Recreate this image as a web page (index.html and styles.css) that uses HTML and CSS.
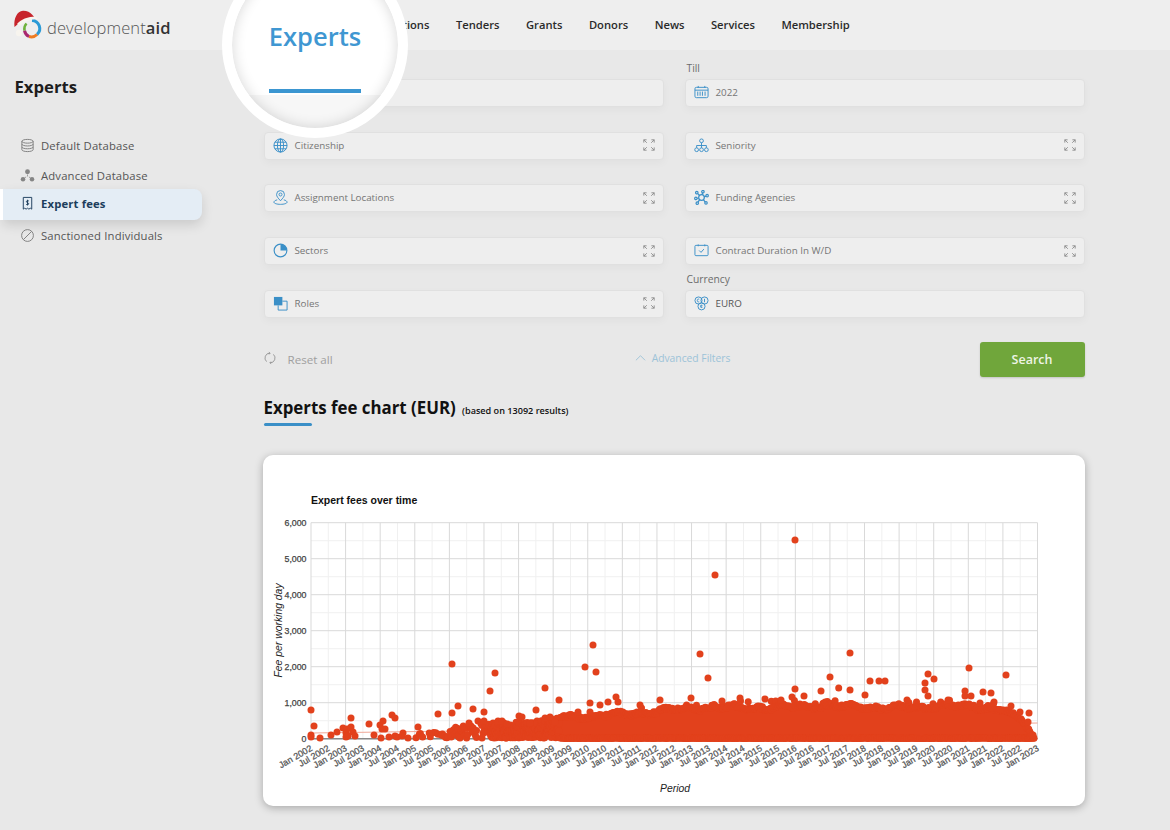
FILE: index.html
```html
<!DOCTYPE html>
<html lang="en">
<head>
<meta charset="utf-8">
<title>Experts fee chart</title>
<link rel="stylesheet" href="styles.css">
</head>
<body>
<header class="topbar">
  <a class="logo">
    <svg class="logo-mark" viewBox="0 0 30 30">
      <path class="ring-blue" d="M19 10.500a8 8 0 0 1 5 14"/>
      <path class="ring-orange" d="M24 24.500a8 8 0 0 1-8 2"/>
      <path class="ring-pink" d="M16 26.500a8 8 0 0 1-4.500-6"/>
      <path class="ring-green" d="M11.500 20.500a8 8 0 0 1 2-7"/>
      <path class="hat" d="M1.500 17C.5 9 4 1 10 .8c4-.1 7 1.700 9 3.700l3 3.500-12 2-5 4z"/>
      <path class="hat-brim" d="M4 14c3.500-4.500 11-7.500 19-7.500l1.500 2.500c-6.500 0-13 2.500-17.500 7z"/>
      <circle class="hat-ball" cx="6" cy="23" r="3.200"/>
    </svg>
    <span class="logo-text">development<b>aid</b></span>
  </a>
  <nav class="nav">
    <a>tions</a><a>Tenders</a><a>Grants</a><a>Donors</a><a>News</a><a>Services</a><a>Membership</a>
  </nav>
</header>

<div class="spotlight">
  <span class="spotlight-text">Experts</span>
  <span class="spotlight-bar"></span>
</div>

<div class="page">
  <aside class="sidebar">
    <h2 class="side-title">Experts</h2>
    <ul class="side-list">
      <li class="side-item">
        <svg class="side-icon" viewBox="0 0 16 16"><ellipse cx="8" cy="3.500" rx="6" ry="2"/><path d="M2 3.500v9c0 1.100 2.700 2 6 2s6-.9 6-2v-9M2 6.500c0 1.100 2.700 2 6 2s6-.9 6-2M2 9.500c0 1.100 2.700 2 6 2s6-.9 6-2"/></svg>
        Default Database
      </li>
      <li class="side-item">
        <svg class="side-icon side-icon-solid" viewBox="0 0 16 16"><circle cx="8" cy="4" r="2.600"/><circle cx="3.200" cy="12" r="2.400"/><circle cx="12.800" cy="12" r="2.400"/><path class="thin" d="M8 7v2M6.500 9.500l-1.500 1M9.500 9.500l1.500 1"/></svg>
        Advanced Database
      </li>
      <li class="side-item side-item-active">
        <svg class="side-icon side-icon-dark" viewBox="0 0 16 16"><path d="M3.500 14V1.500h9V14l-1.500-1-1.500 1-1.500-1-1.500 1-1.500-1z"/><path d="M9.500 5.500C9 4.800 6.800 4.700 6.800 6s2.500 1 2.500 2.300-2.300 1.200-2.900.4M8 4v6"/></svg>
        Expert fees
      </li>
      <li class="side-item">
        <svg class="side-icon" viewBox="0 0 16 16"><circle cx="8" cy="8" r="6.300"/><path d="M3.600 12.400l8.800-8.800"/></svg>
        Sanctioned Individuals
      </li>
    </ul>
  </aside>

  <main class="main">
    <section class="filters">
      <div class="cell">
        <div class="field"></div>
      </div>
      <div class="cell">
        <label class="field-label">Till</label>
        <div class="field">
          <svg class="field-icon" viewBox="0 0 16 16"><rect x="1" y="2.500" width="14" height="11" rx="1.500"/><path d="M4.500 1v2M11.500 1v2M1 5.500h14M4 7v4.500M6.500 7v4.500M9 7v4.500M11.800 7v4.500"/></svg>
          <span class="field-value">2022</span>
        </div>
      </div>
      <div class="cell">
        <div class="field">
          <svg class="field-icon" viewBox="0 0 16 16"><circle cx="8" cy="8" r="7"/><ellipse cx="8" cy="8" rx="3.300" ry="7"/><path d="M1 8h14M2 4.500h12M2 11.500h12M8 1v14"/></svg>
          <span class="field-value">Citizenship</span>
          <svg class="expand" viewBox="0 0 12 12"><path d="M.8 3.600V.8h2.800M.8 .8l3 3M8.400 .8h2.800v2.800M11.200 .8l-3 3M.8 8.400v2.800h2.800M.8 11.200l3-3M8.400 11.200h2.800V8.400M11.200 11.200l-3-3"/></svg>
        </div>
      </div>
      <div class="cell">
        <div class="field">
          <svg class="field-icon" viewBox="0 0 16 16"><circle cx="8" cy="3" r="2"/><circle cx="2.800" cy="12.500" r="2"/><circle cx="8" cy="12.500" r="2"/><circle cx="13.200" cy="12.500" r="2"/><path d="M8 5v5.500M2.800 10.500V8h10.400v2.500"/></svg>
          <span class="field-value">Seniority</span>
          <svg class="expand" viewBox="0 0 12 12"><path d="M.8 3.600V.8h2.800M.8 .8l3 3M8.400 .8h2.800v2.800M11.200 .8l-3 3M.8 8.400v2.800h2.800M.8 11.200l3-3M8.400 11.200h2.800V8.400M11.200 11.200l-3-3"/></svg>
        </div>
      </div>
      <div class="cell">
        <div class="field">
          <svg class="field-icon" viewBox="0 0 16 16"><path d="M8 11.500C5.300 8.500 3.800 6.800 3.800 4.800a4.200 4.200 0 0 1 8.400 0c0 2-1.500 3.700-4.200 6.700z"/><circle cx="8" cy="4.800" r="1.600"/><path d="M4.500 10.500C2.300 11 1 12 1 13c0 1.300 3.100 2.300 7 2.300s7-1 7-2.300c0-1-1.300-2-3.500-2.500"/></svg>
          <span class="field-value">Assignment Locations</span>
          <svg class="expand" viewBox="0 0 12 12"><path d="M.8 3.600V.8h2.800M.8 .8l3 3M8.400 .8h2.800v2.800M11.200 .8l-3 3M.8 8.400v2.800h2.800M.8 11.200l3-3M8.400 11.200h2.800V8.400M11.200 11.200l-3-3"/></svg>
        </div>
      </div>
      <div class="cell">
        <div class="field">
          <svg class="field-icon field-icon-net" viewBox="0 0 16 16"><circle cx="8" cy="8" r="3"/><circle cx="3" cy="2.800" r="1.300"/><circle cx="9.500" cy="1.800" r="1.300"/><circle cx="14" cy="6" r="1.300"/><circle cx="2" cy="9" r="1.300"/><circle cx="3.500" cy="14" r="1.300"/><circle cx="12.800" cy="13.800" r="1.300"/><path d="M4 3.800l2 2.200M9.200 3l-.7 2M12.800 6.500l-2 .8M3.300 8.800H5M4.300 13l1.700-2.800M12 13l-2-2.700"/></svg>
          <span class="field-value">Funding Agencies</span>
          <svg class="expand" viewBox="0 0 12 12"><path d="M.8 3.600V.8h2.800M.8 .8l3 3M8.400 .8h2.800v2.800M11.200 .8l-3 3M.8 8.400v2.800h2.800M.8 11.200l3-3M8.400 11.200h2.800V8.400M11.200 11.200l-3-3"/></svg>
        </div>
      </div>
      <div class="cell">
        <div class="field">
          <svg class="field-icon field-icon-bold" viewBox="0 0 16 16"><circle cx="8" cy="8" r="6.800"/><path class="solid" d="M8 8V1.200A6.800 6.800 0 0 1 14.800 8z"/></svg>
          <span class="field-value">Sectors</span>
          <svg class="expand" viewBox="0 0 12 12"><path d="M.8 3.600V.8h2.800M.8 .8l3 3M8.400 .8h2.800v2.800M11.200 .8l-3 3M.8 8.400v2.800h2.800M.8 11.200l3-3M8.400 11.200h2.800V8.400M11.200 11.200l-3-3"/></svg>
        </div>
      </div>
      <div class="cell">
        <div class="field">
          <svg class="field-icon" viewBox="0 0 16 16"><rect x="1" y="2.500" width="14" height="11" rx="1"/><path d="M5.500 8l2 2 3-3.500M4.500 1.500v2M11.500 1.500v2"/></svg>
          <span class="field-value">Contract Duration In W/D</span>
          <svg class="expand" viewBox="0 0 12 12"><path d="M.8 3.600V.8h2.800M.8 .8l3 3M8.400 .8h2.800v2.800M11.200 .8l-3 3M.8 8.400v2.800h2.800M.8 11.200l3-3M8.400 11.200h2.800V8.400M11.200 11.200l-3-3"/></svg>
        </div>
      </div>
      <div class="cell">
        <div class="field">
          <svg class="field-icon" viewBox="0 0 16 16"><rect class="solid" x="1" y="1" width="9" height="9"/><path d="M10 5.500h5V15H5.500v-5"/></svg>
          <span class="field-value">Roles</span>
          <svg class="expand" viewBox="0 0 12 12"><path d="M.8 3.600V.8h2.800M.8 .8l3 3M8.400 .8h2.800v2.800M11.200 .8l-3 3M.8 8.400v2.800h2.800M.8 11.200l3-3M8.400 11.200h2.800V8.400M11.200 11.200l-3-3"/></svg>
        </div>
      </div>
      <div class="cell">
        <label class="field-label">Currency</label>
        <div class="field">
          <svg class="field-icon" viewBox="0 0 16 16"><circle cx="4.800" cy="4.800" r="3.800"/><circle cx="11.200" cy="4.800" r="3.800"/><circle cx="8" cy="11" r="3.800"/><path d="M5.500 3.500c-1.300-.7-2 .3-2 1.300s.7 2 2 1.300M11.200 3v3.600M7.500 9.500v3M9 10c-1-.7-1.800 0-1.800 1s.8 1.700 1.800 1"/></svg>
          <span class="field-value field-value-dark">EURO</span>
        </div>
      </div>
    </section>

    <section class="actions">
      <span class="reset">
        <svg class="reset-icon" viewBox="0 0 14 14"><path d="M7 1.300A5.700 5.700 0 0 0 3 11.200M7 12.700A5.700 5.700 0 0 0 11 2.800M5.600 .4L7.200 1.300 6 2.800M8.400 13.600L6.800 12.700 8 11.200"/></svg>
        Reset all
      </span>
      <span class="advanced">
        <svg class="advanced-icon" viewBox="0 0 12 8"><path d="M1 6.500L6 1.500l5 5"/></svg>
        Advanced Filters
      </span>
      <button class="search">Search</button>
    </section>

    <h1 class="chart-heading">Experts fee chart (EUR) <small>(based on 13092 results)</small></h1>
    <div class="heading-rule"></div>

    <section class="card">
      <svg id="chart" class="chart" viewBox="263 455 822 351"></svg>
    </section>
  </main>
</div>
<script src="chart.js"></script>
</body>
</html>
```
FILE: styles.css
```css
* { box-sizing: border-box; }
html, body { margin: 0; height: 100%; }
body {
  width: 1170px;
  height: 830px;
  overflow: hidden;
  position: relative;
  background: #e8e8e8;
  font-family: "Open Sans", sans-serif;
  color: #333;
}

/* top bar */
.topbar {
  height: 50px;
  background: #eeeeee;
  display: flex;
  align-items: center;
  padding-left: 13px;
}
.logo { display: flex; align-items: center; width: 389.500px; }
.logo-mark { width: 30px; height: 30px; margin-right: 4px; fill: none; }
.ring-blue { stroke: #2b9ad6; stroke-width: 3; fill: none; }
.ring-orange { stroke: #ee7b22; stroke-width: 3; fill: none; }
.ring-green { stroke: #6fb23c; stroke-width: 2.500; fill: none; }
.ring-pink { stroke: #a9276f; stroke-width: 3; fill: none; }
.hat { fill: #c7252c; }
.hat-brim { fill: #f7f4ee; }
.hat-ball { fill: #f7f4ee; }
.logo-text {
  font-family: "Open Sans", sans-serif;
  font-weight: 300;
  font-size: 16.500px;
  color: #555;
  letter-spacing: .1px;
  margin-top: 5px;
}
.logo-text b { font-weight: 600; color: #333; }
.nav { display: flex; gap: 26.500px; margin-top: -1px; }
.nav a { font-size: 11.200px; font-weight: 600; color: #2a2a2a; white-space: nowrap; }

/* spotlight */
.spotlight {
  position: absolute;
  left: 222px;
  top: -48px;
  width: 186px;
  height: 186px;
  border-radius: 50%;
  border: 10px solid #fff;
  background: linear-gradient(#fff 0, #fff 133px, #f7f7f7 133px);
  box-shadow: inset 0 0 14px rgba(0, 0, 0, .16);
  display: flex;
  flex-direction: column;
  align-items: center;
  z-index: 2;
}
.spotlight-text {
  margin-top: 52px;
  font-size: 25.500px;
  line-height: 44px;
  font-weight: 600;
  color: #3f97d2;
}
.spotlight-bar {
  width: 92px;
  height: 4px;
  margin-top: 31px;
  background: #3b96d1;
}

/* layout */
.page { display: flex; height: 780px; }
.sidebar { width: 263.500px; flex: none; }
.side-title {
  margin: 25px 0 0 14.500px;
  font-size: 16.700px;
  line-height: 24px;
  font-weight: 700;
  color: #1d1d1d;
}
.side-list { list-style: none; margin: 31px 0 0; padding: 0; width: 202px; }
.side-item {
  height: 30px;
  display: flex;
  align-items: center;
  gap: 6px;
  padding-left: 20px;
  font-size: 11.300px;
  font-weight: 500;
  color: #555;
  letter-spacing: .15px;
}
.side-item-active {
  height: 31px;
  margin-top: -1px;
  margin-left: 3px;
  padding: 0 0 2px 17px;
  background: #e4edf5;
  border-radius: 0 8px 8px 0;
  box-shadow: -3px 0 0 #fff, 0 5px 12px rgba(0, 0, 0, .13);
  color: #1c3d5c;
  font-weight: 700;
}
.side-icon {
  width: 15px;
  height: 15px;
  flex: none;
  fill: none;
  stroke: #7d7d7d;
  stroke-width: 1;
}
.side-icon-solid { fill: #858585; stroke: none; }
.side-icon-solid .thin { stroke: #858585; stroke-width: .8; fill: none; }
.side-icon-dark { stroke: #1c3d5c; }

.main { width: 821.500px; flex: none; }

/* filters */
.filters {
  display: grid;
  grid-template-columns: 400px 400.500px;
  column-gap: 21px;
  grid-auto-rows: 52.750px;
  padding-top: 4px;
}
.cell { display: flex; flex-direction: column; justify-content: flex-end; }
.field-label {
  font-size: 10.300px;
  line-height: 14px;
  margin: 0 0 4px 2px;
  color: #6d6d6d;
}
.field {
  height: 28px;
  display: flex;
  align-items: center;
  padding: 0 7px 1px 8px;
  background: #eeeeee;
  border: 1px solid #e0e0e0;
  border-radius: 4px;
  box-shadow: 0 3px 8px rgba(0, 0, 0, .035);
}
.field-icon {
  width: 15px;
  height: 15px;
  flex: none;
  fill: none;
  stroke: #3a8fc7;
  stroke-width: 1;
}
.field-icon-bold circle { stroke-width: 1.200; }
.field-icon-net { stroke-width: 1.300; }
.field-icon .solid { fill: #3a8fc7; stroke: none; }
.field-value {
  margin-left: 7px;
  flex: 1;
  font-size: 9.800px;
  color: #757575;
}
.field-value-dark { color: #555; }
.expand {
  width: 12px;
  height: 12px;
  margin-right: 1px;
  flex: none;
  fill: none;
  stroke: #8b8b8b;
  stroke-width: .9;
}

/* action row */
.actions {
  position: relative;
  display: flex;
  align-items: center;
  height: 35px;
  margin-top: 24px;
}
.reset {
  display: flex;
  align-items: center;
  gap: 12px;
  font-size: 11.600px;
  font-weight: 500;
  color: #a0a0a0;
  margin-top: 1px;
}
.reset-icon {
  width: 12px;
  height: 14px;
  margin-top: -3px;
  fill: none;
  stroke: #8f8f8f;
  stroke-width: 1;
}
.advanced {
  display: flex;
  align-items: center;
  gap: 6px;
  margin-left: 302px;
  font-size: 10.300px;
  font-weight: 500;
  color: #9cc3d8;
  margin-top: -3px;
}
.advanced-icon {
  width: 11px;
  height: 8px;
  fill: none;
  stroke: #9cc3d8;
  stroke-width: 1;
}
.search {
  margin-left: auto;
  margin-right: .500px;
  width: 105px;
  height: 35px;
  border: 0;
  border-radius: 3px;
  background: #70a63b;
  color: #eef4e6;
  font-family: inherit;
  font-size: 12.500px;
  font-weight: 600;
  box-shadow: 0 1px 2px rgba(0, 0, 0, .15);
}

/* chart heading */
.chart-heading {
  margin: 19px 0 0;
  font-size: 16.850px;
  line-height: 24px;
  font-weight: 700;
  color: #111;
}
.chart-heading small { font-size: 9.100px; font-weight: 600; margin-left: 2px; }
.heading-rule { width: 48px; height: 3px; margin-top: 0; background: #3a8fc7; border-radius: 2px; }

/* chart card */
.card {
  width: 822px;
  height: 351px;
  margin: 29px 0 0 -.500px;
  background: #fff;
  border-radius: 10px;
  box-shadow: 0 2px 8px rgba(0, 0, 0, .28);
  overflow: hidden;
}
.chart { display: block; width: 822px; height: 351px; }
.chart text { font-family: "Liberation Sans", Arial, sans-serif; fill: #444; }
.chart .title { font-size: 10.500px; font-weight: 700; fill: #111; }
.chart .axis-title { font-size: 10.400px; font-style: italic; fill: #222; }
.chart .tick-y { font-size: 8.800px; text-anchor: end; fill: #444; stroke: #444; stroke-width: .25; }
.chart .tick-x { font-size: 9px; text-anchor: end; fill: #555; stroke: #555; stroke-width: .25; }
.grid-major { stroke: #d9d9d9; stroke-width: 1; }
.grid-minor { stroke: #f0f0f0; stroke-width: 1; }
.baseline { stroke: #888; stroke-width: 1.500; }
.trend { stroke: #f0a898; stroke-width: 1.200; fill: none; }
.mass { fill: #e2411c; }
.dot { fill: #e2411c; }
```
FILE: chart.js
```js
(function () {
  var X0 = 311, X1 = 1037.5, Y0 = 738.7, YT = 522.7;
  var svg = [];
  var labels = [];
  var months = ['Jan', 'Jul'];
  var n = 42, step = (X1 - X0) / n;
  var i;

  // grid
  for (i = 1; i < n; i += 2) {
    var gx = X0 + i * step;
    svg.push('<line class="grid-minor" x1="' + gx + '" x2="' + gx + '" y1="' + YT + '" y2="' + Y0 + '"/>');
  }
  for (i = 1; i < 12; i += 2) {
    var gy = Y0 - i * 18;
    svg.push('<line class="grid-minor" x1="' + X0 + '" x2="' + X1 + '" y1="' + gy + '" y2="' + gy + '"/>');
  }
  for (i = 0; i <= n; i += 2) {
    var mx = X0 + i * step;
    svg.push('<line class="grid-major" x1="' + mx + '" x2="' + mx + '" y1="' + YT + '" y2="' + Y0 + '"/>');
  }
  for (i = 0; i <= 6; i++) {
    var my = Y0 - i * 36;
    svg.push('<line class="grid-major" x1="' + X0 + '" x2="' + X1 + '" y1="' + my + '" y2="' + my + '"/>');
    var lbl = i === 0 ? '0' : i + ',000';
    labels.push('<text class="tick-y" x="306.500" y="' + (my + 3) + '">' + lbl + '</text>');
  }
  svg.push('<line class="baseline" x1="' + X0 + '" x2="' + X1 + '" y1="' + Y0 + '" y2="' + Y0 + '"/>');
  svg.push('<path class="trend" d="M311 733L1037.500 723"/>');

  // x labels
  for (i = 0; i <= n; i++) {
    var lx = X0 + i * step + 2;
    var year = 2002 + Math.floor(i / 2);
    labels.push('<text class="tick-x" transform="translate(' + lx + ' 750) rotate(-30)">' + months[i % 2] + ' ' + year + '</text>');
  }

  labels.push('<text class="title" x="311" y="504">Expert fees over time</text>');
  labels.push('<text class="axis-title" text-anchor="middle" x="675" y="792">Period</text>');
  labels.push('<text class="axis-title" text-anchor="middle" transform="translate(282 630.500) rotate(-90)">Fee per working day</text>');

  // upper edge of the dense mass (x, y)
  var env = [[415,733],[440,732],[450,726],[470,724],[500,722],[530,722],[545,719],[565,716],[600,713],[640,711],[670,709],[700,707],[750,705],[800,705],[850,706],[900,705],[950,705],[1000,708],[1012,712],[1022,719],[1030,730],[1034,737]];
  var seed = 12345;
  function rnd() {
    seed = (seed * 16807) % 2147483647;
    return seed / 2147483647;
  }
  function top(x) {
    for (var k = 1; k < env.length; k++) {
      if (x <= env[k][0]) {
        var a = env[k - 1], b = env[k];
        return a[1] + (b[1] - a[1]) * (x - a[0]) / (b[0] - a[0]);
      }
    }
    return 738;
  }
  // slow wobble so the top of the cloud is uneven
  function wobble(x) {
    var damp = x > 1010 ? .3 : .7;
    return damp * (1.700 * Math.sin(x / 9.100) + 1.800 * Math.sin(x / 3.700 + 1) + 1.400 * Math.sin(x / 23));
  }

  // solid body of the cloud, overlapping the dots along its upper edge
  var poly = [];
  for (var px = 556; px <= 1032; px += 6) { poly.push(px + ',' + (top(px) + 2)); }
  poly.push('1032,740', '556,740');
  svg.push('<polygon class="mass" points="' + poly.join(' ') + '"/>');

  var dots = [];
  function dot(x, y) { dots.push('<circle class="dot" cx="' + x.toFixed(1) + '" cy="' + Math.min(y, 738.500).toFixed(1) + '" r="3.500"/>'); }

  // dense cloud
  for (var x = 416; x < 1034; x += 1.1) {
    var t = top(x);
    if (x < 560) {
      var cnt = x < 450 ? 1 : x < 490 ? 2 : 4;
      for (var c = 0; c < cnt; c++) {
        var yy = 738 - Math.pow(rnd(), 1.3) * (738 - t);
        if (x > 490 || rnd() > .35) dot(x, yy);
      }
    } else {
      dot(x, t + wobble(x) + rnd() * 3);
      if (rnd() < .06 && x < 1010) dot(x, t - 1 - rnd() * 4);
      dot(x + rnd(), 738 + rnd() * .5);
    }
  }

  // scattered points read from the plot
  var pts = [[311,710],[314,726],[311,735],[311,737],[320,738],[331,735],[337,732],[343,728],[347,729],[351,718],[351,727],[346,733],[353,732],[346,737],[355,736],[348,736],[369,724],[374,735],[380,725],[383,721],[381,738],[385,729],[382,729],[392,715],[395,718],[389,737],[395,736],[403,733],[397,737],[402,736],[408,738],[418,727],[438,714],[452,664],[452,713],[458,706],[473,709],[469,723],[478,721],[484,712],[484,721],[490,691],[495,673],[498,721],[502,721],[507,724],[536,710],[545,688],[559,700],[519,716],[522,717],[530,723],[545,718],[550,717],[555,722],[593,645],[585,667],[596,672],[616,697],[590,703],[578,712],[600,705],[608,702],[618,702],[590,712],[640,705],[660,700],[700,654],[715,575],[708,678],[691,698],[722,701],[740,698],[765,699],[795,540],[795,689],[804,696],[792,697],[781,700],[821,691],[830,677],[838.700,688],[850,653],[850,690],[865,695],[870,681],[879,681],[885,681],[928,674],[934,679],[925,683],[925,690],[928,696],[907,700],[969,668],[965,691],[965,696],[971,696],[983,692],[991,693],[1006,675],[1011,706],[1020,712],[1029,713],[948,700],[994,702],[980,703],[1028,722],[1033,735]];
  pts.forEach(function (p) { dot(p[0], p[1]); });

  document.getElementById('chart').innerHTML = svg.join('') + dots.join('') + labels.join('');
})();
```
